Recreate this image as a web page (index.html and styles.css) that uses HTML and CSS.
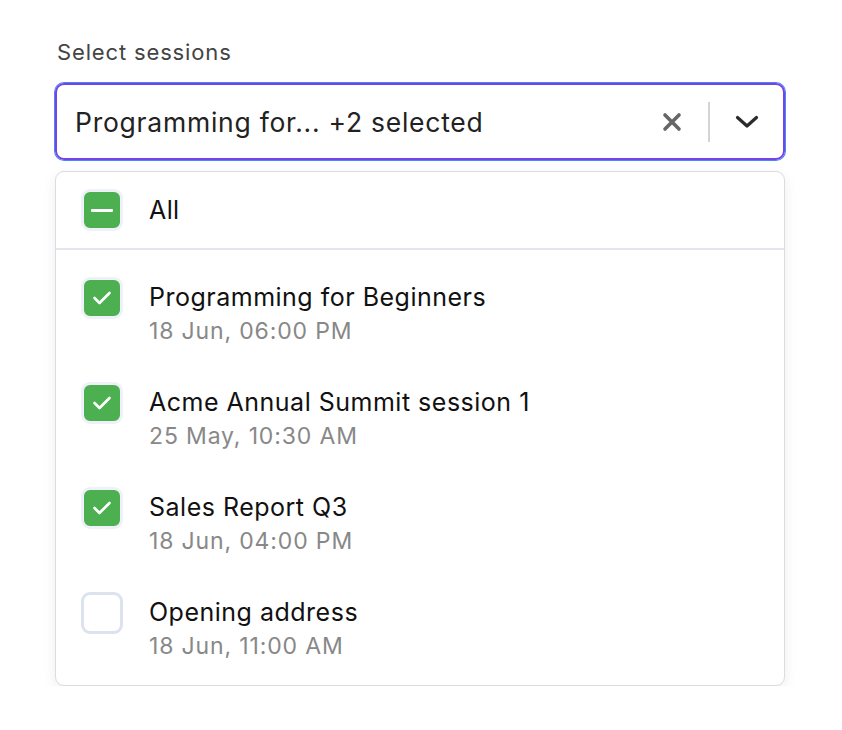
FILE: index.html
```html
<!DOCTYPE html>
<html>
<head>
<meta charset="utf-8">
<link rel="stylesheet" href="styles.css">
</head>
<body>
<div class="field">
  <div class="label">Select sessions</div>
  <div class="control">
    <div class="value">Programming for... +2 selected</div>
    <div class="actions">
      <span class="clear">
        <svg width="20" height="20" viewBox="0 0 20 20"><path d="M3 3 L17 17 M17 3 L3 17" stroke="#666" stroke-width="3.6" stroke-linecap="round" fill="none"/></svg>
      </span>
      <span class="sep"></span>
      <span class="chev">
        <svg width="24" height="14" viewBox="0 0 24 14"><path d="M2.5 2.5 L12 11 L21.5 2.5" stroke="#2b2b2b" stroke-width="3.2" stroke-linecap="round" stroke-linejoin="round" fill="none"/></svg>
      </span>
    </div>
  </div>
  <div class="menu">
    <div class="all-row">
      <span class="cb on"><span class="dash"></span></span>
      <span class="all-text">All</span>
    </div>
    <div class="list">
      <div class="item">
        <span class="cb on"><svg width="20" height="16" viewBox="0 0 20 16"><path d="M2.5 8 L7.5 13 L17.5 3" stroke="#fff" stroke-width="2.6" stroke-linecap="round" stroke-linejoin="round" fill="none"/></svg></span>
        <div class="text"><div class="title">Programming for Beginners</div><div class="date">18 Jun, 06:00 PM</div></div>
      </div>
      <div class="item">
        <span class="cb on"><svg width="20" height="16" viewBox="0 0 20 16"><path d="M2.5 8 L7.5 13 L17.5 3" stroke="#fff" stroke-width="2.6" stroke-linecap="round" stroke-linejoin="round" fill="none"/></svg></span>
        <div class="text"><div class="title">Acme Annual Summit session 1</div><div class="date">25 May, 10:30 AM</div></div>
      </div>
      <div class="item">
        <span class="cb on"><svg width="20" height="16" viewBox="0 0 20 16"><path d="M2.5 8 L7.5 13 L17.5 3" stroke="#fff" stroke-width="2.6" stroke-linecap="round" stroke-linejoin="round" fill="none"/></svg></span>
        <div class="text"><div class="title">Sales Report Q3</div><div class="date">18 Jun, 04:00 PM</div></div>
      </div>
      <div class="item">
        <span class="cb off"></span>
        <div class="text"><div class="title">Opening address</div><div class="date">18 Jun, 11:00 AM</div></div>
      </div>
    </div>
  </div>
</div>
</body>
</html>
```
FILE: styles.css
```css
html, body { margin: 0; padding: 0; background: #fff; }
body { font-family: Inter, "Noto Sans", sans-serif; color: #111; }
.field { width: 730px; padding: 37px 0 0 55px; }
.label { font-size: 22px; letter-spacing: 0.85px; line-height: 30px; color: #444; padding-left: 2px; margin-bottom: 16px; }
.control {
  box-sizing: border-box; height: 77px;
  border: 2px solid #7444e6; border-radius: 9px;
  box-shadow: 0 0 0 1px #4a86f5;
  display: flex; align-items: center; padding: 0 24px 0 18px;
}
.value { flex: 1; font-size: 26.5px; letter-spacing: 0.75px; color: #222; }
.actions { display: flex; align-items: center; }
.clear { display: flex; width: 20px; height: 20px; margin-right: 26px; }
.sep { width: 2px; height: 40px; background: #d4d4d4; margin-right: 25px; }
.chev { display: flex; }
.menu {
  margin-top: 11px; box-sizing: border-box; height: 515px;
  border: 1px solid #dcdcdc; border-radius: 9px; background: #fff;
  box-shadow: 0 4px 14px rgba(0,0,0,0.07);
}
.all-row { display: flex; align-items: center; height: 76px; padding-left: 25px; border-bottom: 2px solid #e3e6ee; }
.cb { box-sizing: border-box; width: 42px; height: 42px; border-radius: 9px; display: flex; align-items: center; justify-content: center; flex: none; }
.cb.on { background: #4caf50; border: 3px solid #eef2f8; }
.cb.off { background: #fff; border: 3px solid #dce3ee; }
.dash { width: 22px; height: 3px; background: #fff; border-radius: 1px; }
.all-text { margin-left: 26px; font-size: 25px; letter-spacing: 0.4px; }
.list { padding: 12px 0 6px; }
.item { display: flex; align-items: flex-start; padding: 18px 0 19px 25px; }
.item .cb { margin-top: -3px; }
.text { margin-left: 26px; }
.title { font-size: 25px; letter-spacing: 0.5px; line-height: 34px; color: #111; }
.date { font-size: 23px; letter-spacing: 0.85px; line-height: 34px; color: #888; }
```
